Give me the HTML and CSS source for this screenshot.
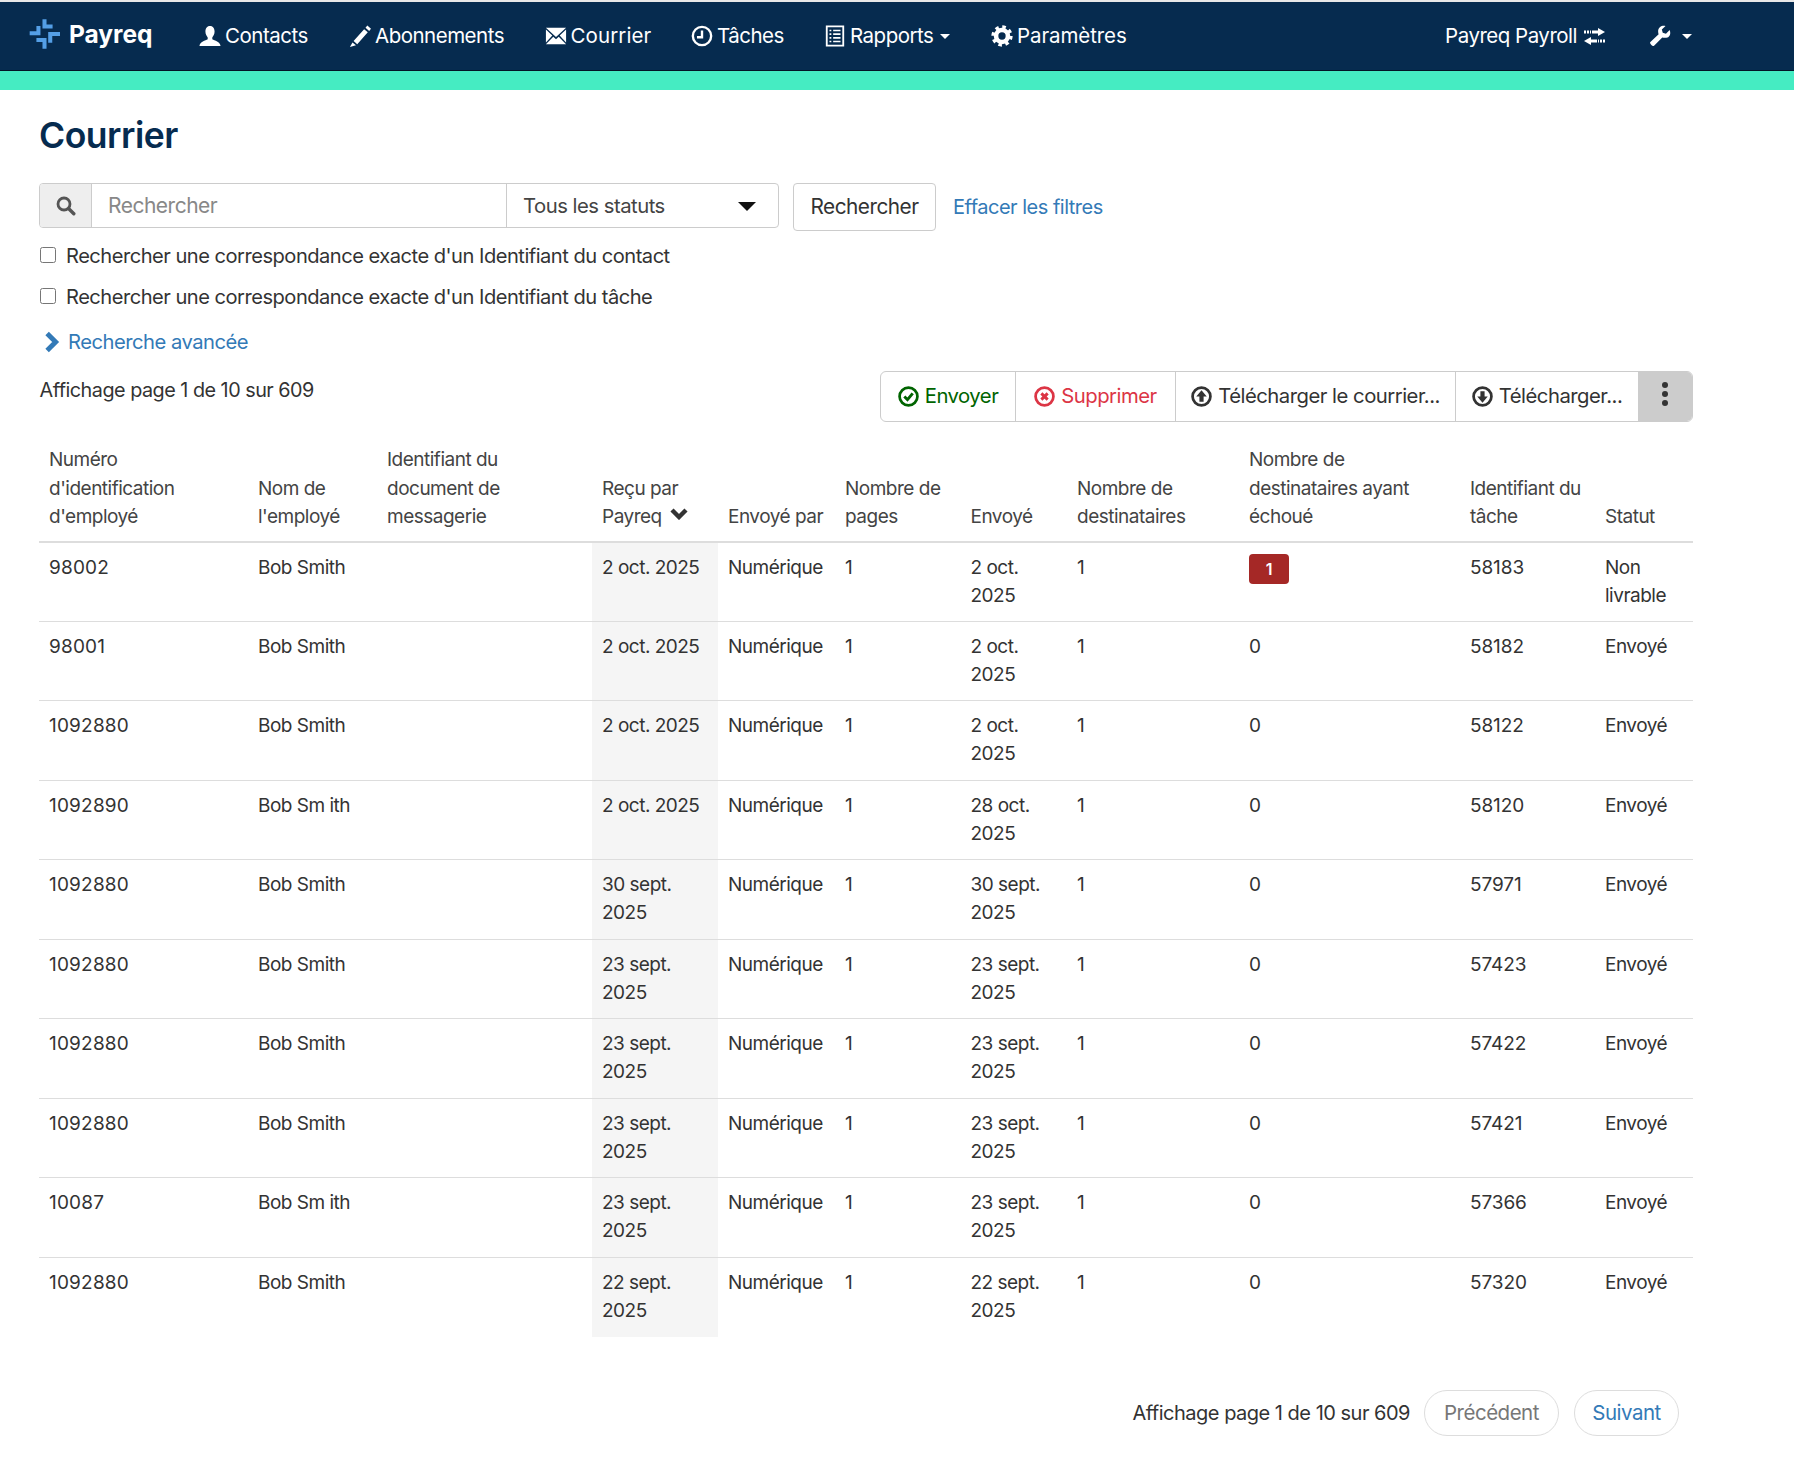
FILE: index.html
```html
<!DOCTYPE html>
<html lang="fr"><head><meta charset="utf-8"><title>Courrier</title><link rel="stylesheet" href="styles.css"></head>
<body>
<header class="topbar">
  <nav class="nav">
    <a class="brand"><svg class="logo" viewBox="0 0 92 88"><path fill="#549fe6" d="M40 0h12v16h18v12H40zM22 20h12v28H2V36h20zM57 38h35v12H69v20H57zM22 56h30v32H40V68H22z"/></svg><b>Payreq</b></a>
    <a class="item i1"><svg class="ic" viewBox="0 0 24 24"><path fill="#fff" d="M12 1c-3.500 0-5 3-5 6 0 3 1.500 5 2.500 6.500v2C7 17 1 18 .5 23h23c-.5-5-6.500-6-9-7.500v-2C15.500 12 17 10 17 7c0-3-1.500-6-5-6z"/></svg>Contacts</a>
    <a class="item i2"><svg class="ic" viewBox="0 0 24 24"><path fill="#fff" d="M20 .5l4 3.500-2 2.500-4-3.500zM16.500 4.500l4 3.500L9 21l-4-3.500zM3.800 19l3.800 3.200L1 24z"/></svg>Abonnements</a>
    <a class="item i3"><svg class="ic" viewBox="0 0 24 24"><path fill="#fff" d="M1 3h22L12 13zM1 5l7 6.500L1 19zM23 5l-7 6.500L23 19zM9 12.700l3 2.800 3-2.800 8 8.300H1z"/></svg>Courrier</a>
    <a class="item i4"><svg class="ic" viewBox="0 0 24 24"><circle cx="12" cy="12" r="10" fill="none" stroke="#fff" stroke-width="2.600"/><path fill="none" stroke="#fff" stroke-width="2.600" d="M12 6v7.300H6.500"/></svg>Tâches</a>
    <a class="item i5"><svg class="ic" viewBox="0 0 24 24"><path fill="none" stroke="#fff" stroke-width="2" d="M3 1.500h18v21H3z"/><path fill="none" stroke="#fff" stroke-width="1.800" d="M6 6h2M10 6h8M6 10h2M10 10h8M6 14h2M10 14h8M6 18h2M10 18h8"/></svg>Rapports<i class="caret"></i></a>
    <a class="item i6"><svg class="ic" viewBox="0 0 24 24"><circle cx="12" cy="12" r="6.500" fill="none" stroke="#fff" stroke-width="5"/><circle cx="12" cy="12" r="9.500" fill="none" stroke="#fff" stroke-width="4.200" stroke-dasharray="3.700 3.760"/></svg>Paramètres</a>
    <span class="spacer"></span>
    <a class="item i7">Payreq Payroll<svg class="swap" viewBox="0 0 21 17"><path fill="#fff" d="M14 0l7 4-7 4V5.500H8v-3h6zM0 2.500h2v3H0zM3 2.500h2v3H3zM6 2.500h1v3H6zM7 9v2.500h6v3H7V17l-7-4zM14 11.500h1v3h-1zM16 11.500h2v3h-2zM19 11.500h2v3h-2z"/></svg></a>
    <a class="item i8"><svg class="ic" viewBox="0 0 24 24"><path fill="#fff" d="M22.500 5.500l-4 4-3.500-1-1-3.500 4-4c-4-1-8.500 1.500-8 6.500 0 1 .2 1.500.5 2.500L1.500 18.500c-1.500 1.500 2.500 5.500 4 4l9-9c1 .4 1.500.5 2.500.5 5 .5 7.500-4 5.500-8.500z"/></svg><i class="caret"></i></a>
  </nav>
  <div class="stripe"></div>
</header>
<main class="page">
  <h1>Courrier</h1>
  <form class="filters">
    <div class="search-group">
      <span class="addon"><svg viewBox="0 0 20 20" width="20" height="20"><circle cx="8" cy="8" r="6" fill="none" stroke="#555" stroke-width="2.800"/><path stroke="#555" stroke-width="3.400" stroke-linecap="round" d="M12.800 12.800l5 5"/></svg></span>
      <span class="input">Rechercher</span>
      <span class="select">Tous les statuts<i class="arrow"></i></span>
    </div>
    <span class="btn-search">Rechercher</span>
    <a class="clear">Effacer les filtres</a>
  </form>
  <label class="check c1"><input type="checkbox">Rechercher une correspondance exacte d'un Identifiant du contact</label>
  <label class="check c2"><input type="checkbox">Rechercher une correspondance exacte d'un Identifiant du tâche</label>
  <a class="advanced"><svg viewBox="0 0 12 18" width="16" height="22"><path fill="none" stroke="#337ab7" stroke-width="4" d="M2 2l7 7-7 7"/></svg>Recherche avancée</a>
  <div class="toolbar-row">
    <span class="count">Affichage page 1 de 10 sur 609</span>
    <div class="toolbar">
      <a class="tb send"><svg class="tic" viewBox="0 0 20 20"><circle cx="10" cy="10" r="8.500" fill="none" stroke="#006400" stroke-width="2.600"/><path fill="none" stroke="#006400" stroke-width="2.800" d="M6 10l3 3 5-6"/></svg>Envoyer</a>
      <a class="tb del"><svg class="tic" viewBox="0 0 20 20"><circle cx="10" cy="10" r="8.500" fill="none" stroke="#dc3545" stroke-width="2.600"/><path fill="none" stroke="#dc3545" stroke-width="2.800" d="M7 7l6 6M13 7l-6 6"/></svg>Supprimer</a>
      <a class="tb up"><svg class="tic" viewBox="0 0 20 20"><circle cx="10" cy="10" r="8.500" fill="none" stroke="#333" stroke-width="2.600"/><path fill="#333" d="M10 4l5 6h-3v5H8v-5H5z"/></svg>Télécharger le courrier...</a>
      <a class="tb down"><svg class="tic" viewBox="0 0 20 20"><circle cx="10" cy="10" r="8.500" fill="none" stroke="#333" stroke-width="2.600"/><path fill="#333" d="M10 16l5-6h-3V5H8v5H5z"/></svg>Télécharger...</a>
      <a class="tb more"><i></i><i></i><i></i></a>
    </div>
  </div>
  <table class="grid">
    <colgroup><col class="w1"><col class="w2"><col class="w3"><col class="w4"><col class="w5"><col class="w6"><col class="w7"><col class="w8"><col class="w9"><col class="w10"><col class="w11"></colgroup>
    <thead><tr><th>Numéro d'identification d'employé</th><th>Nom de l'employé</th><th>Identifiant du document de messagerie</th><th>Reçu par Payreq <svg class="sort" viewBox="0 0 18 12"><path fill="none" stroke="#333" stroke-width="4.400" d="M2 2l7 7 7-7"/></svg></th><th>Envoyé par</th><th>Nombre de pages</th><th>Envoyé</th><th>Nombre de destinataires</th><th>Nombre de destinataires ayant échoué</th><th>Identifiant du tâche</th><th>Statut</th></tr></thead>
    <tbody>
      <tr><td>98002</td><td>Bob Smith</td><td></td><td class="hl">2 oct. 2025</td><td>Numérique</td><td>1</td><td>2 oct. 2025</td><td>1</td><td><span class="badge">1</span></td><td>58183</td><td>Non livrable</td></tr>
      <tr><td>98001</td><td>Bob Smith</td><td></td><td class="hl">2 oct. 2025</td><td>Numérique</td><td>1</td><td>2 oct. 2025</td><td>1</td><td>0</td><td>58182</td><td>Envoyé</td></tr>
      <tr><td>1092880</td><td>Bob Smith</td><td></td><td class="hl">2 oct. 2025</td><td>Numérique</td><td>1</td><td>2 oct. 2025</td><td>1</td><td>0</td><td>58122</td><td>Envoyé</td></tr>
      <tr><td>1092890</td><td>Bob Sm ith</td><td></td><td class="hl">2 oct. 2025</td><td>Numérique</td><td>1</td><td>28 oct. 2025</td><td>1</td><td>0</td><td>58120</td><td>Envoyé</td></tr>
      <tr><td>1092880</td><td>Bob Smith</td><td></td><td class="hl">30 sept. 2025</td><td>Numérique</td><td>1</td><td>30 sept. 2025</td><td>1</td><td>0</td><td>57971</td><td>Envoyé</td></tr>
      <tr><td>1092880</td><td>Bob Smith</td><td></td><td class="hl">23 sept. 2025</td><td>Numérique</td><td>1</td><td>23 sept. 2025</td><td>1</td><td>0</td><td>57423</td><td>Envoyé</td></tr>
      <tr><td>1092880</td><td>Bob Smith</td><td></td><td class="hl">23 sept. 2025</td><td>Numérique</td><td>1</td><td>23 sept. 2025</td><td>1</td><td>0</td><td>57422</td><td>Envoyé</td></tr>
      <tr><td>1092880</td><td>Bob Smith</td><td></td><td class="hl">23 sept. 2025</td><td>Numérique</td><td>1</td><td>23 sept. 2025</td><td>1</td><td>0</td><td>57421</td><td>Envoyé</td></tr>
      <tr><td>10087</td><td>Bob Sm ith</td><td></td><td class="hl">23 sept. 2025</td><td>Numérique</td><td>1</td><td>23 sept. 2025</td><td>1</td><td>0</td><td>57366</td><td>Envoyé</td></tr>
      <tr><td>1092880</td><td>Bob Smith</td><td></td><td class="hl">22 sept. 2025</td><td>Numérique</td><td>1</td><td>22 sept. 2025</td><td>1</td><td>0</td><td>57320</td><td>Envoyé</td></tr>
    </tbody>
  </table>
  <div class="pager">
    <span class="pager-text">Affichage page 1 de 10 sur 609</span>
    <a class="pill prev">Précédent</a>
    <a class="pill next">Suivant</a>
  </div>
</main>
</body></html>
```
FILE: styles.css
```css
* { box-sizing: border-box; }
html, body { margin: 0; }
body { font-family: Inter, "Liberation Sans", sans-serif; font-size: 19px; line-height: 28px; color: #333; background: #fff; letter-spacing: -0.5px; width: 1794px; height: 1482px; overflow: hidden; }
a { color: inherit; text-decoration: none; }
.topbar { padding-top: 2px; background: #e8e8e8; }
.nav { height: 69px; background: #062b4f; border-bottom: 1px solid #021426; display: flex; align-items: center; color: #fff; padding: 0 102px 0 29px; font-size: 20.500px; }
.brand { display: flex; align-items: center; width: 170px; margin-top: -5px; font-size: 24.500px; }
.brand b { font-weight: 700; margin-left: 9px; letter-spacing: 0; }
.logo { width: 31px; height: 30px; }
.item { display: flex; align-items: center; white-space: nowrap; }
.ic { width: 22px; height: 22px; margin-right: 4px; }
.i1 { width: 150px; }
.i2 { width: 195.500px; }
.i3 { width: 146.500px; letter-spacing: 0.1px; }
.i4 { width: 133px; }
.i5 { width: 167px; }
.i6 { width: 160px; letter-spacing: -0.1px; }
.swap { width: 21px; height: 17px; margin-left: 7px; }
.i8 { margin-left: 44px; }
.i8 .ic { margin-right: 0; }
.spacer { flex: 1; }
.caret { display: inline-block; border-left: 5px solid transparent; border-right: 5px solid transparent; border-top: 5px solid #fff; margin-left: 7px; }
.i8 .caret { margin-left: 11px; }
.stripe { height: 19px; background: #45ecc2; }
.page { padding: 0 101px 0 39px; }
h1 { margin: 23px 0 24px; height: 46px; font-size: 35.500px; line-height: 46px; font-weight: 600; color: #062b4f; letter-spacing: -0.5px; }
.filters { display: flex; align-items: flex-start; font-size: 20.300px; }
.search-group { display: flex; width: 740px; height: 45px; border: 1px solid #ccc; border-radius: 4px; }
.addon { width: 52px; background: #eee; border-right: 1px solid #ccc; display: flex; align-items: center; justify-content: center; border-radius: 3px 0 0 3px; }
.input { width: 415px; padding: 0 16px; line-height: 43px; color: #888; border-right: 1px solid #ccc; font-size: 21px; }
.select { flex: 1; display: flex; justify-content: space-between; align-items: center; padding: 1px 22px 0 16px; color: #444; }
.arrow { border-left: 9px solid transparent; border-right: 9px solid transparent; border-top: 9px solid #111; }
.btn-search { margin-left: 14px; width: 143px; height: 48px; border: 1px solid #ccc; border-radius: 4px; display: flex; align-items: center; justify-content: center; font-size: 20.800px; }
.clear { margin-left: 17px; line-height: 48px; color: #337ab7; font-size: 20px; }
.check { display: flex; align-items: center; margin-left: 1px; height: 28px; font-size: 20.100px; }
.check input { margin: -2px 10px 0 0; width: 16px; height: 16px; }
.c1 { margin-top: 10.500px; }
.c2 { margin-top: 13px; }
.advanced { display: flex; align-items: center; margin: 17px 0 0 5px; color: #337ab7; font-size: 20.200px; }
.advanced svg { margin-right: 8px; }
.toolbar-row { display: flex; justify-content: space-between; align-items: flex-start; margin: 15px 0 0 0.500px; height: 50px; }
.count { margin-top: 5.500px; font-size: 19.800px; }
.toolbar { display: flex; height: 51px; border: 1px solid #ccc; border-radius: 6px; overflow: hidden; font-size: 20.300px; }
.tb { display: flex; align-items: center; justify-content: center; border-right: 1px solid #ccc; white-space: nowrap; }
.send { width: 135px; color: #006400; }
.del { width: 160px; color: #dc3545; }
.up { width: 280px; }
.down { width: 182px; border-right: 0; }
.more { width: 54px; background: #ccc; border: 0; flex-direction: column; gap: 3px; padding-bottom: 4px; }
.more i { width: 6px; height: 6px; border-radius: 50%; background: #333; }
.tic { width: 21px; height: 21px; margin-right: 6px; }
.grid { border-collapse: collapse; table-layout: fixed; width: 1654px; margin-top: 20.500px; }
.w1 { width: 209px; } .w2 { width: 129px; } .w3 { width: 215px; } .w4 { width: 126px; }
.w5 { width: 117px; } .w6 { width: 125.500px; } .w7 { width: 106.500px; } .w8 { width: 172px; }
.w9 { width: 221px; } .w10 { width: 135px; } .w11 { width: 98px; }
th { text-align: left; vertical-align: bottom; font-weight: 400; color: #444; padding: 5px 10px 9.500px; border-bottom: 2px solid #ddd; line-height: 28.500px; }
td { vertical-align: top; padding: 11px 10px 10px; height: 79.500px; border-top: 1px solid #ddd; line-height: 28.250px; }
tbody tr:first-child td { border-top: 0; height: 78.500px; }
td:first-child { letter-spacing: 0.2px; }
td:nth-child(10) { letter-spacing: -0.1px; }
.hl { background: #f5f5f5; }
.sort { width: 18px; height: 12px; margin-left: 3px; vertical-align: 3px; }
.badge { display: inline-block; width: 40px; height: 30px; background: #a52826; color: #fff; border-radius: 4px; text-align: center; line-height: 30px; font-weight: 600; font-size: 16px; }
.pager { display: flex; align-items: center; justify-content: flex-end; margin-top: 53px; padding-right: 14px; font-size: 20px; }
.pager-text { margin-right: 14px; }
.pill { height: 46px; border: 1px solid #ddd; border-radius: 23px; display: flex; align-items: center; justify-content: center; font-size: 20.500px; }
.prev { width: 135px; color: #777; margin-right: 15px; }
.next { width: 105px; color: #337ab7; }
```
